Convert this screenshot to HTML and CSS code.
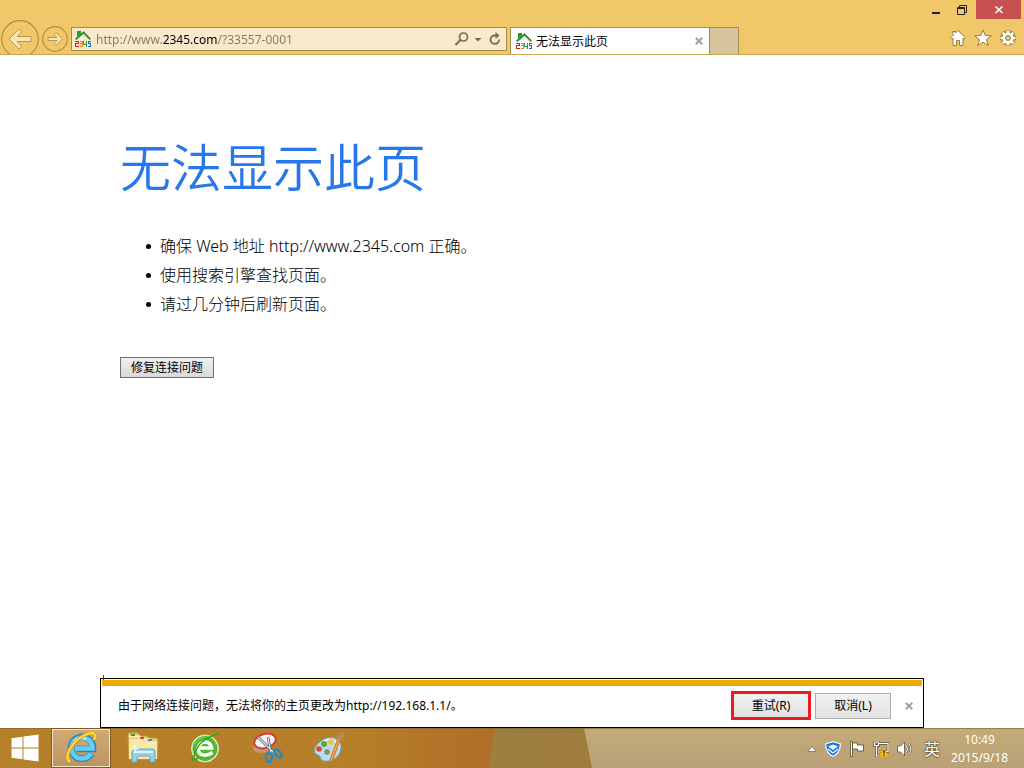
FILE: index.html
```html
<!DOCTYPE html>
<html lang="zh-CN">
<head>
<meta charset="utf-8">
<title>无法显示此页</title>
<link rel="stylesheet" href="styles.css">
</head>
<body>
<svg class="defs" width="0" height="0" aria-hidden="true">
  <symbol id="site" viewBox="0 0 16 16">
    <path d="M.7 8.300 8.500 1.500 15.300 8.300" fill="none" stroke="#2f7a2c" stroke-width="1.800"/>
    <path d="M2 8.500 8.500 3 14 8.500" fill="none" stroke="#a7d69f"/>
    <path d="M2 0h4v2.500L2 6z" fill="#18a51d"/>
    <g fill="none" stroke-width="1" shape-rendering="crispEdges">
      <path d="M0 10.500h3.500v2H.5v3H4" stroke="#e01b20"/>
      <path d="M5 10.500h2.500v5H5M5 12.500h2.500" stroke="#f08a1c"/>
      <path d="M11.500 16v-6M8.500 10v3.500H12" stroke="#1d9d34"/>
      <path d="M16 10.500h-2.500v2h2v3H13" stroke="#1767d2"/>
    </g>
  </symbol>
</svg>

<header class="chrome">
  <div class="caption">
    <button class="cap-btn" aria-label="最小化"><svg width="10" height="10" viewBox="0 0 10 10"><path d="M1 7h8v2H1z" fill="#222"/></svg></button>
    <button class="cap-btn" aria-label="还原"><svg width="10" height="10" viewBox="0 0 10 10"><path d="M2.500 2V.5h7v7H8M.5 2.500h7v7h-7zM0 3.500h8" fill="none" stroke="#222"/></svg></button>
    <button class="cap-btn cap-close" aria-label="关闭"><svg width="10" height="10" viewBox="0 0 10 10"><path d="m1.500 1.500 7 6.500m0-6.500-7 6.500" fill="none" stroke="#fff" stroke-width="1.700"/></svg></button>
  </div>
  <div class="toolbar">
    <button class="nav back" aria-label="后退"><svg width="38" height="38" viewBox="0 0 38 38"><circle cx="19" cy="19" r="18.300" fill="none" stroke="#b08d45" stroke-width="1.200"/><path d="M8 19 18 9l3 2.700-5 4.800h14v5H16l5 4.800-3 2.700z" fill="#fae5b5" stroke="#b9974f"/></svg></button>
    <button class="nav" aria-label="前进"><svg width="26" height="26" viewBox="0 0 26 26"><circle cx="13" cy="13" r="12.300" fill="none" stroke="#b08d45" stroke-width="1.200"/><path d="m20.500 13-6.500-6.500-2 2 3 3H6v3h9l-3 3 2 2z" fill="#fae5b5" stroke="#b9974f"/></svg></button>
    <form class="address">
      <svg width="16" height="16"><use href="#site"/></svg>
      <input class="url" type="text" aria-label="地址" value="http://www.2345.com/?33557-0001">
      <button type="button" class="tool" aria-label="搜索"><svg width="14" height="14" viewBox="0 0 14 14"><g fill="none" stroke="#776d54"><circle cx="8.500" cy="5" r="4" stroke-width="1.700"/><path d="m5.500 8-5 5" stroke-width="2"/></g></svg></button>
      <button type="button" class="tool" aria-label="展开"><svg width="8" height="14" viewBox="0 0 8 14"><path d="M.5 6h7L4 9.500z" fill="#776d54"/></svg></button>
      <button type="button" class="tool reload" aria-label="刷新"><svg width="12" height="14" viewBox="0 0 12 14"><path d="M7.500 3.500H5.500A4.200 4.200 0 1 0 10 7.500" fill="none" stroke="#776d54" stroke-width="1.900"/><path d="M6.500 0 10.500 3.500 6.500 7z" fill="#776d54"/></svg></button>
    </form>
    <div class="tab">
      <svg width="16" height="16"><use href="#site"/></svg>
      <span class="tab-title">无法显示此页</span>
      <button class="tool" aria-label="关闭选项卡"><svg width="8" height="8" viewBox="0 0 8 8"><path d="m.7.700 6.600 6.600m0-6.600L.7 7.300" stroke="#a2a2a2" stroke-width="2"/></svg></button>
    </div>
    <button class="new-tab" aria-label="新建选项卡"></button>
    <div class="quick">
      <button class="tool" aria-label="主页"><svg width="18" height="18" viewBox="0 0 18 18"><path d="m9 1.500 7.500 7.300-1.300 1.400-1.200-1V16.500h-3.500v-5h-3v5H4V9.200l-1.200 1L1.500 8.800 4 6.300V2.500h2.500V4z" fill="#fff" stroke="#9b7b3a"/></svg></button>
      <button class="tool" aria-label="收藏夹"><svg width="18" height="18" viewBox="0 0 18 18"><path d="m9 .8 2.200 5.700 6.100.3-4.800 3.800 1.700 5.900L9 13.200l-5.200 3.300 1.700-5.900L.7 6.800l6.100-.3z" fill="#fff" stroke="#9b7b3a"/></svg></button>
      <button class="tool" aria-label="工具"><svg width="18" height="18" viewBox="0 0 18 18"><g stroke="#9b7b3a" stroke-width="4.500"><path d="M9 1v16M1 9h16M3.300 3.300l11.400 11.400M3.300 14.700 14.700 3.300"/></g><circle cx="9" cy="9" r="6.200" fill="#9b7b3a"/><path d="M9 1.500v15M1.500 9h15M3.700 3.700l10.600 10.600M3.700 14.300 14.300 3.700" stroke="#fff" stroke-width="2.600"/><circle cx="9" cy="9" r="5.500" fill="#fff"/><circle cx="9" cy="9" r="2.500" fill="#f0c869" stroke="#9b7b3a"/></svg></button>
    </div>
  </div>
</header>

<main class="page">
  <h1>无法显示此页</h1>
  <ul>
    <li>确保 Web 地址 http://www.2345.com 正确。</li>
    <li>使用搜索引擎查找页面。</li>
    <li>请过几分钟后刷新页面。</li>
  </ul>
  <button class="fix">修复连接问题</button>
</main>

<section class="notice" role="alert">
  <p>由于网络连接问题，无法将你的主页更改为http://192.168.1.1/。</p>
  <button class="btn retry">重试(R)</button>
  <button class="btn">取消(L)</button>
  <button class="tool dismiss" aria-label="关闭"><svg width="8" height="8" viewBox="0 0 8 8"><path d="m.7.700 6.600 6.600m0-6.600L.7 7.300" stroke="#a2a2a2" stroke-width="2"/></svg></button>
</section>

<footer class="taskbar">
  <svg class="wall" viewBox="0 0 1024 40" preserveAspectRatio="none" aria-hidden="true">
    <defs>
      <linearGradient id="w1"><stop offset="0" stop-color="#b5802a"/><stop offset=".7" stop-color="#b67f29"/><stop offset="1" stop-color="#b06e28"/></linearGradient>
      <linearGradient id="w2"><stop offset="0" stop-color="#9b813e"/><stop offset="1" stop-color="#a07c3c"/></linearGradient>
      <linearGradient id="w3" x2="0" y2="1"><stop offset="0" stop-color="#c4ab79"/><stop offset="1" stop-color="#b9a076"/></linearGradient>
    </defs>
    <path d="M0 0h495l-6 40H0z" fill="url(#w1)"/>
    <path d="M495 0h90l7 40H489z" fill="url(#w2)"/>
    <path d="M584 0h440v40H592z" fill="url(#w3)"/>
    <path d="M0 .5h1024" stroke="#7b6235" opacity=".6"/>
  </svg>
  <nav class="apps">
    <button class="app start" aria-label="开始"><svg width="28" height="28" viewBox="0 0 28 28"><path d="m.5 4.300 11-1.600v10.800H.5zM12.500 2.500 27.500.5v13h-15zM.5 14.500h11v10.800l-11-1.600zM12.500 14.500h15v13l-15-2z" fill="#fff"/></svg></button>
    <button class="app active" aria-label="Internet Explorer"><svg width="32" height="32" viewBox="0 0 32 32"><path d="M26.500 21.500A11 11 0 1 1 28 17H11.500" fill="none" stroke="#2586bd" stroke-width="6.500"/><path d="M26 21.500A10.500 10.500 0 1 1 27.500 16.500H11" fill="none" stroke="#66cdf3" stroke-width="4.600"/><path d="M9 9Q14 4 21 7" fill="none" stroke="#c5f2ff" stroke-width="2"/><path d="M5 30C-2 25 7 10 18 4s14-2 11 4" fill="none" stroke="#cf9415" stroke-width="3.600"/><path d="M5 30C-2 25 7 10 18 4s14-2 11 4" fill="none" stroke="#ffd63f" stroke-width="2.300"/></svg></button>
    <button class="app" aria-label="文件资源管理器"><svg width="34" height="32" viewBox="0 0 34 32"><path d="M2 3q0-2 2-2h8l2 3h7l2 2h7q2 0 2 2l-1 19H3z" fill="#e7ca72" stroke="#c99b3f"/><path d="M3 7h12l2 3h14v17H3z" fill="#f9e9a7"/><path d="M3 4h11l2 3h8l2 3h5M3 5h10l2 4h8" fill="none" stroke="#fff8d5"/><path d="M5 2h4v2H5z" fill="#20a841"/><path d="M14 5h4v2h-4z" fill="#d14b38"/><path d="M22 7h4v2h-4z" fill="#3293e4"/><path d="M6 30V20q0-3 3-3h17q3 0 3 3v10h-5v-4q0-2-2-2h-9q-2 0-2 2v4z" fill="#9bd1e8" stroke="#5ca8ca"/><path d="M8 20h19" stroke="#dff8ff" stroke-width="2"/><path d="M9 13v8m-4-4h8" stroke="#fff"/></svg></button>
    <button class="app" aria-label="浏览器"><svg width="32" height="32" viewBox="0 0 32 32"><circle cx="16" cy="16.500" r="13.500" fill="#f8fff2" stroke="#d3dfcb"/><circle cx="16" cy="16.500" r="12.500" fill="#4fb92e"/><path d="M5 17a11 11 0 0 1 22-2v-4A12 12 0 0 0 5 17" fill="#82d94b"/><path d="M23.500 20.500Q17 25 11.500 22C6 17 11 9.500 17 10q5 1 5.500 6H9" fill="none" stroke="#fff" stroke-width="3.600"/><path d="M3 28C7 25 4 18 13 10S26 4 30 1M3 28q5 0 7-3" fill="none" stroke="#37a51d" stroke-width="1.600"/></svg></button>
    <button class="app" aria-label="截图工具"><svg width="32" height="32" viewBox="0 0 32 32"><ellipse cx="10" cy="16" rx="8" ry="5" fill="#bf9d73"/><ellipse cx="14" cy="9" rx="11" ry="7" transform="rotate(-16 14 9)" fill="#f5f4f5" stroke="#d73b39" stroke-width="2"/><path d="m7 5 16 16M17 5l3 17" stroke="#55606c" stroke-width="2.600"/><path d="m7 5 16 16M17 5l3 17" stroke="#dce2e7" stroke-width="1.200"/><g fill="none" stroke="#2388c6" stroke-width="2.500"><ellipse cx="18" cy="25.500" rx="3" ry="4.500"/><ellipse cx="27" cy="21.500" rx="2.600" ry="4.600" transform="rotate(-40 27 21.500)"/></g></svg></button>
    <button class="app" aria-label="画图"><svg width="32" height="32" viewBox="0 0 32 32"><path d="M10 8C18 2 29 7 28 16c-1 10-10 14-17 13-5-1-2-5-6-6C-2 21 2 12 10 8z" fill="#b9ddea" stroke="#6da4bc"/><path d="M9 10C17 5 25 9 25 16" fill="none" stroke="#e4f5f9" stroke-width="2"/><circle cx="6" cy="17" r="2.800" fill="#d94939"/><circle cx="11" cy="12" r="3" fill="#54aa45"/><circle cx="18" cy="10" r="3" fill="#edc73f"/><circle cx="14" cy="20" r="2.500" fill="#b5802a" stroke="#6da4bc"/><path d="m26 7-8 22" stroke="#c66518" stroke-width="3.400"/><path d="m26 7-8 22" stroke="#f4a54d" stroke-width="1.800"/><path d="m23 6 3-5 5-1v5l-4 4z" fill="#b88a58"/></svg></button>
  </nav>
  <div class="tray">
    <button class="tool" aria-label="显示隐藏的图标"><svg width="10" height="16" viewBox="0 0 10 16"><path d="m.8 10.500 4.200-5 4.200 5z" fill="#fff" stroke="#6b5b3c" stroke-width=".7"/></svg></button>
    <svg width="16" height="16" viewBox="0 0 16 16"><path d="M8 0 16 2.500Q16 12 8 16 0 12 0 2.500z" fill="#fff"/><path d="M8 1.200 14.800 3.300Q14.500 11.500 8 14.800 1.500 11.500 1.200 3.300z" fill="#1978e5"/><path d="M3.200 5.500 8 3.500l4.800 2L8 9z" fill="#fff"/><path d="m3 8 5 4 5-4" fill="none" stroke="#fff" stroke-width="1.200"/></svg>
    <svg width="16" height="16" viewBox="0 0 16 16"><path d="M1.500.5h2v15h-2zM3.500 2h5v2h6v6h-6V8h-5z" fill="#fff" stroke="#4f452e" stroke-width=".8"/></svg>
    <svg width="16" height="16" viewBox="0 0 16 16"><g fill="none"><path d="M6 2.500h9v8H8M3.500 7v8H8M1.500 1v3.500h4V1zM3.500 4v3" stroke="#5c503a" stroke-width="2.600"/><path d="M6 2.500h9v8H8M3.500 7v8H8M1.500 1v3.500h4V1zM3.500 4v3" stroke="#fff" stroke-width="1.200"/></g><path d="m11 6 5 10H6z" fill="#fdbd15" stroke="#c7840b" stroke-width=".5"/><path d="M11 9.500v3m0 1v1.200" stroke="#3d2d09" stroke-width="1.400"/></svg>
    <svg width="16" height="16" viewBox="0 0 16 16"><path d="M.5 5h3l4-4v14l-4-4h-3z" fill="#fff" stroke="#5c503a" stroke-width=".8"/><path d="M9.500 5q2 3 0 6m2.500-8q4 5 0 10" fill="none" stroke="#6c5e45" stroke-width="2.200"/><path d="M9.500 5q2 3 0 6m2.500-8q4 5 0 10" fill="none" stroke="#fff"/></svg>
    <span class="ime">英</span>
    <div class="clock"><time>10:49</time><time>2015/9/18</time></div>
  </div>
</footer>
</body>
</html>
```
FILE: styles.css
```css
* { box-sizing: border-box; }
body {
  margin: 0;
  min-height: 100vh;
  display: flex;
  flex-direction: column;
  background: #fff;
  color: #000;
  font: 12px/16px "Noto Sans", "Noto Sans CJK SC", sans-serif;
}
button { font: inherit; color: inherit; padding: 0; border: 0; background: none; }
svg { display: block; flex: none; }
.defs { position: absolute; }

.chrome { background: #f0c869; border-bottom: 1px solid #cba553; }
.caption { display: flex; justify-content: flex-end; height: 20px; padding-right: 3px; }
.cap-btn { width: 26px; height: 19px; display: grid; place-items: center; }
.cap-close { width: 45px; margin-left: 1px; background: #c75050; }
.toolbar { display: flex; align-items: flex-start; height: 34px; padding: 0 7px 0 1px; overflow: hidden; }
.nav { margin: 6px 3px 0 0; }
.nav.back { margin-top: 0; }
.address {
  flex: 0 1 436px;
  min-width: 0;
  height: 24px;
  margin-top: 7px;
  padding: 0 5px 0 3px;
  display: flex;
  align-items: center;
  background: #faeacb;
  border: 1px solid #a98b4b;
}
.url {
  flex: 1;
  min-width: 0;
  height: 20px;
  padding: 0;
  margin-left: 5px;
  border: 0;
  outline: 0;
  font: inherit;
  color: transparent;
  background: linear-gradient(90deg, #817967 66px, #000 66px 122px, #817967 122px);
  background-clip: text;
  -webkit-background-clip: text;
}
.address .tool { margin-left: 5px; }
.address .reload { margin-left: 7px; }
.tab {
  flex: 0 1 200px;
  height: 27px;
  margin: 7px 0 0 3px;
  padding: 0 6px 0 5px;
  display: flex;
  align-items: center;
  gap: 4px;
  background: #fff;
  border: 1px solid #a98b4b;
  border-bottom: 0;
}
.tab-title { flex: 1; padding-top: 2px; white-space: nowrap; }
.new-tab { width: 29px; height: 27px; margin-top: 7px; background: #d6c49c; border: solid #a98b4b; border-width: 1px 1px 0 0; }
.quick { display: flex; gap: 7px; margin: 9px 0 0 auto; }

.page { flex: 1; padding: 78px 119px 20px 120px; }
h1 { margin: 0; font-size: 51px; line-height: 68px; font-weight: 350; color: #2878ec; }
ul { margin: 31px 0 0; padding: 0 0 0 26px; list-style: none; font-size: 16px; line-height: 29px; font-weight: 300; }
li { display: flex; align-items: center; gap: 9px; }
li::before { content: ""; width: 5px; height: 5px; border-radius: 50%; background: #000; }
.fix { margin-top: 38px; height: 21px; padding: 0 10px; line-height: 19px; background: linear-gradient(#efefef, #dadada); border: 1px solid #707070; }

.notice {
  position: relative;
  height: 50px;
  margin: 0 100px;
  padding: 5px 10px 0 17px;
  display: flex;
  align-items: center;
  border: 1px solid #000;
}
.notice::before { content: ""; position: absolute; inset: 1px 1px auto; height: 6px; background: #f0ab00; }
.notice::after { content: ""; position: absolute; left: 2px; top: -4px; width: 1px; height: 5px; background: #9c2025; }
.notice p { flex: 1; margin: 0; }
.btn { width: 76px; height: 26px; background: linear-gradient(#f1f1f1, #e2e2e2); border: 1px solid #acacac; }
.retry { width: 80px; height: 29px; margin-right: 4px; border: 3px solid #ed1c24; }
.dismiss { margin-left: 14px; }

.taskbar { position: relative; height: 40px; display: flex; justify-content: space-between; background: #b5802a; }
.wall { position: absolute; inset: 0; width: 100%; height: 100%; }
.apps, .tray { position: relative; display: flex; align-items: center; }
.app { width: 58px; height: 38px; margin-right: 4px; display: grid; place-items: center; }
.start { width: 50px; margin-right: 2px; }
.app.active { background: linear-gradient(#d0aa73, #bd9465); border: 1px solid #f6e6c6; outline: 1px solid #7c5a25; outline-offset: 0; }
.tray { gap: 8px; padding: 2px 16px 0 0; color: #fff; }
.ime { margin-left: 3px; font-size: 16px; line-height: 20px; text-shadow: 0 0 2px #46391e, 0 0 2px #46391e; }
.clock { display: flex; flex-direction: column; align-items: center; margin-left: 3px; line-height: 18px; }
```
